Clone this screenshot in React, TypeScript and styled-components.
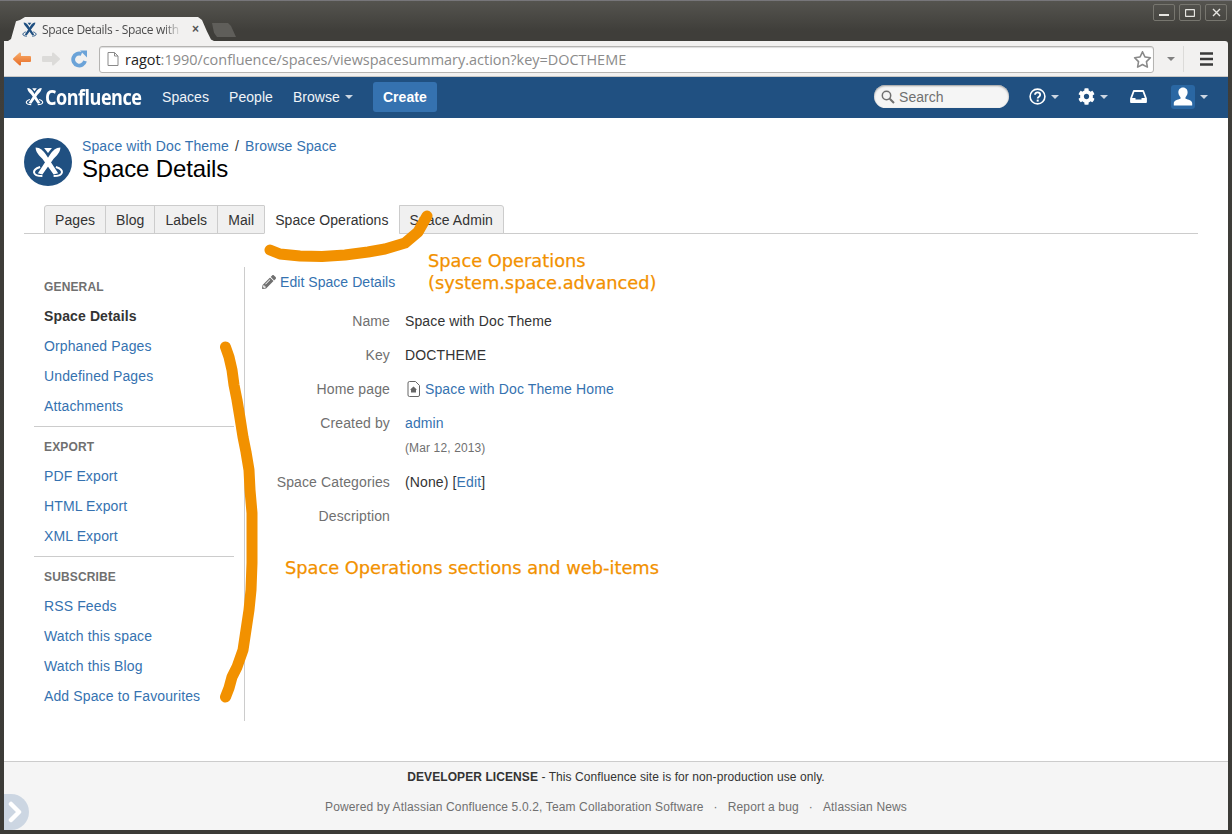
import React from "react";
import styled, { createGlobalStyle } from "styled-components";
import { FaCog, FaPencilAlt } from "react-icons/fa";
import { FaRegStar } from "react-icons/fa6";

const Global = createGlobalStyle`
  html, body { margin: 0; padding: 0; background: #3c3b37; }
  * { box-sizing: border-box; }
`;

const sans = `"Liberation Sans", Arial, sans-serif`;
const ui = `"Open Sans", "Noto Sans", sans-serif`;
const LINK = "#3572b0";
const ORANGE = "#f29100";

const Window = styled.div`
  position: relative;
  width: 1232px;
  height: 834px;
  overflow: hidden;
  display: flex;
  flex-direction: column;
  padding: 0 4px 4px;
  background: linear-gradient(#55544f 0, #3f3e3a 30px, #3c3b37 100%);
  border-top: 1px solid #77767a;
  font-family: ${sans};
`;
const TitleBar = styled.div`
  height: 40px;
  flex: none;
  display: flex;
  align-items: flex-end;
  padding-left: 4px;
  position: relative;
`;
const BrowserTab = styled.div`
  width: 206px;
  height: 24px;
  background: #f2f1f0;
  clip-path: polygon(0 100%, 3px 92%, 8px 18%, 12px 3px, 17px 0, 190px 0, 194px 3px, 199px 60%, 203px 94%, 206px 100%);
  display: flex;
  align-items: center;
  padding: 0 0 0 13px;
  gap: 4px;
  font: 12px ${ui};
  color: #4c4c4c;
`;
const TabTitle = styled.span`
  width: 141px;
  white-space: nowrap;
  letter-spacing: -0.3px;
  -webkit-mask-image: linear-gradient(90deg, #000 122px, transparent 140px);
  mask-image: linear-gradient(90deg, #000 122px, transparent 140px);
`;
const TabClose = styled.span`
  font: bold 12px ${sans};
  color: #555;
  margin-left: 5px;
`;
const NewTab = styled.div`
  width: 24px;
  height: 14px;
  margin: 0 0 4px -2px;
  background: #5f5e5a;
  clip-path: polygon(0 0, 16px 0, 19px 3px, 24px 100%, 5px 100%, 2px 70%);
`;
const WinButtons = styled.div`
  position: absolute;
  top: 3px;
  right: 1px;
  display: flex;
  gap: 4px;
`;
const WinButton = styled.div`
  width: 22px;
  height: 17px;
  border: 1px solid #77766f;
  border-radius: 2px;
  color: #e6e5e1;
  display: flex;
  align-items: center;
  justify-content: center;
`;
const Toolbar = styled.div`
  height: 36px;
  flex: none;
  background: #f2f1f0;
  border-bottom: 1px solid #c9c8c6;
  border-radius: 0 3px 0 0;
  display: flex;
  align-items: center;
  padding: 0 0 0 8px;
`;
const NavGlyph = styled.svg<{ $ml?: number }>`
  flex: none;
  display: block;
  margin-left: ${(p) => p.$ml ?? 0}px;
`;
const Omnibox = styled.div`
  width: 1055px;
  height: 27px;
  margin-left: 11px;
  margin-top: 1px;
  background: #fff;
  border: 1px solid #b5b4b2;
  border-radius: 3px;
  box-shadow: inset 0 1px 1px #ddd;
  display: flex;
  align-items: center;
  padding: 0 1px 0 7px;
  gap: 6px;
`;
const Url = styled.div`
  flex: 1;
  font: 14.45px ${ui};
  color: #8b8b8b;
  white-space: nowrap;
`;
const UrlHost = styled.span`
  color: #222;
`;
const ToolbarSep = styled.div`
  width: 1px;
  height: 26px;
  background: #dcdbd9;
  margin: 0 16px 0 8px;
`;
const Nav = styled.nav`
  height: 41px;
  flex: none;
  background: #205081;
  display: flex;
  align-items: center;
  padding: 0 20px 2px 20px;
  color: #fff;
  font-size: 14px;
  letter-spacing: 0.05px;
`;
const Brand = styled.div`
  display: flex;
  align-items: center;
  width: 138px;
`;
const BrandName = styled.span`
  font: bold 21.5px "Open Sans", sans-serif;
  letter-spacing: -0.6px;
  transform: scaleX(0.84);
  transform-origin: left center;
  white-space: nowrap;
`;
const NavLink = styled.span`
  display: inline-flex;
  align-items: center;
  gap: 5px;
  margin-right: 20px;
  color: #f0f4f8;
`;
const Caret = styled.i<{ $c?: string; $ml?: number }>`
  display: inline-block;
  flex: none;
  width: 0;
  height: 0;
  margin-left: ${(p) => p.$ml ?? 0}px;
  border-left: 4px solid transparent;
  border-right: 4px solid transparent;
  border-top: 4px solid ${(p) => p.$c ?? "#ccd6e2"};
`;
const CreateButton = styled.div`
  width: 64px;
  height: 30px;
  background: #3572b0;
  border-radius: 3px;
  display: flex;
  align-items: center;
  justify-content: center;
  font-weight: bold;
`;
const NavRight = styled.div`
  margin-left: auto;
  display: flex;
  align-items: center;
`;
const SearchBox = styled.div`
  width: 135px;
  height: 23px;
  border-radius: 12px;
  background: #f5f5f5;
  box-shadow: inset 0 1px 2px #999;
  display: flex;
  align-items: center;
  padding-left: 7px;
  gap: 4px;
  color: #707070;
  margin-right: 20px;
`;
const NavIcon = styled.div<{ $w: number }>`
  width: ${(p) => p.$w}px;
  display: flex;
  align-items: center;
  gap: 5px;
`;
const Avatar = styled.div`
  width: 24px;
  height: 24px;
  background: #2a67a3;
  border-radius: 3px;
  display: flex;
  align-items: center;
  justify-content: center;
`;
const Page = styled.main`
  flex: 1;
  display: flex;
  flex-direction: column;
  background: #fff;
  min-height: 0;
  letter-spacing: 0.125px;
`;
const PageHead = styled.header`
  padding: 20px 0 0 20px;
  display: flex;
  gap: 10px;
  height: 87px;
  flex: none;
`;
const SpaceLogo = styled.div`
  width: 48px;
  height: 48px;
  border-radius: 50%;
  background: #205081;
  display: flex;
  align-items: center;
  justify-content: center;
`;
const Crumbs = styled.div`
  font-size: 14px;
  line-height: 16px;
  color: #333;
`;
const A = styled.a`
  color: ${LINK};
  text-decoration: none;
`;
const CrumbSep = styled.span`
  margin: 0 6px;
`;
const Title = styled.h1`
  margin: 0;
  font: normal 24px/30px ${sans};
  letter-spacing: -0.15px;
  color: #000;
`;
const TabBar = styled.div`
  flex: none;
  margin: 0 30px 0 20px;
  height: 29px;
  border-bottom: 1px solid #ccc;
  padding-left: 20px;
  display: flex;
`;
const PageTab = styled.div<{ $active?: boolean }>`
  height: 29px;
  padding: 0 10px;
  margin-left: -1px;
  display: flex;
  align-items: center;
  font-size: 14px;
  letter-spacing: 0.08px;
  color: #333;
  background: ${(p) => (p.$active ? "#fff" : "#f0f0f0")};
  border: 1px solid #ccc;
  border-bottom: ${(p) => (p.$active ? "1px solid #fff" : "1px solid #ccc")};
  border-top-color: ${(p) => (p.$active ? "#fff" : "#ccc")};
  &:first-child { margin-left: 0; border-radius: 3px 0 0 0; }
  &:last-child { border-radius: 0 3px 0 0; }
`;
const Body = styled.div`
  flex: 1;
  padding: 33px 0 0 30px;
  display: flex;
  align-items: flex-start;
  min-height: 0;
`;
const Sidebar = styled.aside`
  width: 200px;
  flex: none;
  padding-bottom: 9px;
`;
const Section = styled.section`
  padding: 10px 0 5px;
  border-bottom: 1px solid #ccc;
  &:last-child { border-bottom: 0; padding-bottom: 0; }
`;
const SectionHeading = styled.div`
  height: 20px;
  margin: 0 0 4px 10px;
  font: bold 12px/20px ${sans};
  letter-spacing: 0.15px;
  color: #707070;
`;
const SideItem = styled.div<{ $current?: boolean }>`
  height: 30px;
  line-height: 30px;
  padding-left: 10px;
  font-size: 14px;
  font-weight: ${(p) => (p.$current ? "bold" : "normal")};
  color: ${(p) => (p.$current ? "#333" : LINK)};
`;
const Content = styled.div`
  margin-left: 10px;
  flex: 1;
  height: 454px;
  border-left: 1px solid #ccc;
  padding: 5px 0 0 17px;
`;
const EditLink = styled.div`
  height: 20px;
  display: flex;
  align-items: center;
  gap: 4px;
  font-size: 14px;
  letter-spacing: 0.05px;
  margin-bottom: 12px;
`;
const Row = styled.div`
  display: grid;
  grid-template-columns: 128px 1fr;
  column-gap: 15px;
  line-height: 34px;
  font-size: 14px;
  color: #333;
`;
const Label = styled.div`
  text-align: right;
  color: #707070;
`;
const ValueLine = styled.div`
  display: flex;
  align-items: center;
  gap: 5px;
  height: 34px;
  padding-left: 2px;
`;
const DateLine = styled.div`
  font-size: 12px;
  line-height: 16px;
  color: #707070;
  margin-bottom: 9px;
`;
const Footer = styled.footer`
  height: 69px;
  flex: none;
  background: #f5f5f5;
  border-top: 1px solid #ccc;
  padding-top: 7px;
  text-align: center;
  font-size: 12px;
  letter-spacing: 0.08px;
  color: #333;
  position: relative;
`;
const FooterLine = styled.div`
  height: 16px;
  line-height: 16px;
  margin-bottom: 14px;
`;
const FooterMuted = styled(FooterLine)`
  color: #707070;
  letter-spacing: 0.14px;
`;
const Dot = styled.span`
  margin: 0 10px;
`;
const Collapse = styled.div`
  position: absolute;
  left: 0;
  bottom: 0;
  width: 25px;
  height: 36px;
  background: #ccd6e2;
  border-radius: 0 18px 18px 0;
  display: flex;
  align-items: center;
  justify-content: center;
  padding-right: 4px;
`;
const Overlay = styled.svg`
  position: absolute;
  inset: -1px 0 0 0;
  pointer-events: none;
`;
const Note = styled.div<{ $x: number; $y: number }>`
  position: absolute;
  left: ${(p) => p.$x}px;
  top: ${(p) => p.$y}px;
  color: ${ORANGE};
  font: 17.8px/22px "DejaVu Sans", sans-serif;
  -webkit-text-stroke: 0.25px ${ORANGE};
  white-space: nowrap;
`;

const BrandMark = ({ size, color = "#fff" }: { size: number; color?: string }) => (
  <svg width={size} height={size} viewBox="0 0 32 32" fill="none" style={{ display: "block", flex: "none" }}>
    <path d="M5 3C9 3 12 6 14 9L25 26L21 27L11 13C8 10 5 7 5 3Z" fill={color} />
    <path d="M27 3C23 3 20 6 18 9L7 26L11 27L21 13C24 10 27 7 27 3Z" fill={color} />
    <path d="M12.500 3.500h7L16 8z" fill={color} />
    <path d="M9 20.500C1 23 2 28.500 11 28.500" stroke={color} strokeWidth="1.800" />
    <path d="M23 20.500C31 23 30 28.500 21 28.500" stroke={color} strokeWidth="1.800" />
  </svg>
);

const SIDE = [
  { h: "GENERAL", items: ["Space Details", "Orphaned Pages", "Undefined Pages", "Attachments"] },
  { h: "EXPORT", items: ["PDF Export", "HTML Export", "XML Export"] },
  { h: "SUBSCRIBE", items: ["RSS Feeds", "Watch this space", "Watch this Blog", "Add Space to Favourites"] },
];

export default function App() {
  return (
    <>
      <Global />
      <Window>
        <TitleBar>
          <BrowserTab>
            <BrandMark size={17} color="#205081" />
            <TabTitle>Space Details - Space with</TabTitle>
            <TabClose>×</TabClose>
          </BrowserTab>
          <NewTab />
          <WinButtons>
            <WinButton>
              <svg width="10" height="8" viewBox="0 0 10 8"><rect x="0" y="5" width="10" height="2" fill="currentColor" /></svg>
            </WinButton>
            <WinButton>
              <svg width="10" height="8" viewBox="0 0 10 8"><rect x=".5" y=".5" width="9" height="7" rx="1" fill="none" stroke="currentColor" strokeWidth="1.300" /></svg>
            </WinButton>
            <WinButton>
              <svg width="9" height="9" viewBox="0 0 9 9"><path d="M1 1l7 7M8 1L1 8" stroke="currentColor" strokeWidth="1.400" /></svg>
            </WinButton>
          </WinButtons>
        </TitleBar>
        <Toolbar>
          <NavGlyph width="20" height="16" viewBox="0 0 20 16">
            <defs>
              <linearGradient id="backFill" x1="0" y1="0" x2="0" y2="1">
                <stop offset="0" stopColor="#f6a866" />
                <stop offset="1" stopColor="#e8702a" />
              </linearGradient>
            </defs>
            <path d="M8 2.500L2 8l6 5.500V10h10V6H8z" fill="url(#backFill)" stroke="url(#backFill)" strokeWidth="2" strokeLinejoin="round" />
          </NavGlyph>
          <NavGlyph width="20" height="16" viewBox="0 0 20 16" $ml={9}>
            <path d="M12 2.500L18 8l-6 5.500V10H2V6h10z" fill="#dcdbd9" stroke="#dcdbd9" strokeWidth="2" strokeLinejoin="round" />
          </NavGlyph>
          <NavGlyph width="18" height="18" viewBox="0 0 18 18" $ml={9}>
            <path d="M15 11A6 6 0 1 1 11.500 4" fill="none" stroke="#6ba3d8" strokeWidth="3.800" />
            <path d="M10 .5l7 0 0 7z" fill="#6ba3d8" />
          </NavGlyph>
          <Omnibox>
            <NavGlyph width="12" height="14" viewBox="0 0 12 14">
              <path d="M1 .5h6.500L11 4v9.500H1z" fill="#fff" stroke="#8a8a8a" />
              <path d="M7.500.5V4H11" fill="none" stroke="#8a8a8a" />
            </NavGlyph>
            <Url>
              <UrlHost>ragot</UrlHost>:1990/confluence/spaces/viewspacesummary.action?key=DOCTHEME
            </Url>
            <FaRegStar size={19} color="#8a8a8a" />
          </Omnibox>
          <Caret $c="#808080" $ml={13} />
          <ToolbarSep />
          <NavGlyph width="14" height="14" viewBox="0 0 14 14">
            <path d="M0 1.500h13M0 7h13M0 12.500h13" stroke="#3a3a3a" strokeWidth="2.400" />
          </NavGlyph>
        </Toolbar>
        <Nav>
          <Brand>
            <BrandMark size={21} />
            <BrandName>Confluence</BrandName>
          </Brand>
          <NavLink>Spaces</NavLink>
          <NavLink>People</NavLink>
          <NavLink>Browse <Caret /></NavLink>
          <CreateButton>Create</CreateButton>
          <NavRight>
            <SearchBox>
              <svg width="14" height="14" viewBox="0 0 14 14" fill="none" stroke="#707070" strokeWidth="1.500">
                <circle cx="5.500" cy="5.500" r="4.200" />
                <path d="M8.700 8.700L13 13" strokeWidth="2" />
              </svg>
              Search
            </SearchBox>
            <NavIcon $w={49}>
              <svg width="17" height="17" viewBox="0 0 17 17" fill="none">
                <circle cx="8.500" cy="8.500" r="7.400" stroke="#fff" strokeWidth="1.600" />
                <path d="M6 6.800c0-3.300 5.200-3.300 5.200 0 0 2-2.500 1.800-2.500 3.700" stroke="#fff" strokeWidth="1.800" />
                <rect x="7.700" y="11.600" width="2" height="2" fill="#fff" />
              </svg>
              <Caret />
            </NavIcon>
            <NavIcon $w={52}>
              <FaCog size={17} color="#fff" />
              <Caret />
            </NavIcon>
            <NavIcon $w={41}>
              <svg width="17" height="13" viewBox="0 0 17 13" fill="none">
                <path d="M3.800 1h9.400l2.800 7.500V12H1V8.500z" stroke="#fff" strokeWidth="1.800" strokeLinejoin="round" />
                <path d="M1 8h4.500v1.500h6V8H16v4H1z" fill="#fff" />
              </svg>
            </NavIcon>
            <NavIcon $w={37}>
              <Avatar>
                <svg width="22" height="22" viewBox="0 0 22 22" fill="#fff">
                  <path d="M11 1.500c3 0 4.800 2.400 4.600 5.300-.2 2-1.100 3.500-2.100 4.400v1.500c2.800.9 6.700 1.600 6.700 4.500v2.300H1.800v-2.300c0-2.900 3.900-3.600 6.700-4.500v-1.500c-1-.9-1.900-2.400-2.100-4.400C6.200 3.900 8 1.500 11 1.500z" />
                </svg>
              </Avatar>
              <Caret />
            </NavIcon>
          </NavRight>
        </Nav>
        <Page>
          <PageHead>
            <SpaceLogo>
              <BrandMark size={36} />
            </SpaceLogo>
            <div>
              <Crumbs>
                <A>Space with Doc Theme</A>
                <CrumbSep>/</CrumbSep>
                <A>Browse Space</A>
              </Crumbs>
              <Title>Space Details</Title>
            </div>
          </PageHead>
          <TabBar>
            <PageTab>Pages</PageTab>
            <PageTab>Blog</PageTab>
            <PageTab>Labels</PageTab>
            <PageTab>Mail</PageTab>
            <PageTab $active>Space Operations</PageTab>
            <PageTab>Space Admin</PageTab>
          </TabBar>
          <Body>
            <Sidebar>
              {SIDE.map((s) => (
                <Section key={s.h}>
                  <SectionHeading>{s.h}</SectionHeading>
                  {s.items.map((i) => (
                    <SideItem key={i} $current={i === "Space Details"}>{i}</SideItem>
                  ))}
                </Section>
              ))}
            </Sidebar>
            <Content>
              <EditLink>
                <FaPencilAlt size={14} color="#707070" />
                <A>Edit Space Details</A>
              </EditLink>
              <Row><Label>Name</Label><div>Space with Doc Theme</div></Row>
              <Row><Label>Key</Label><div>DOCTHEME</div></Row>
              <Row>
                <Label>Home page</Label>
                <ValueLine>
                  <svg width="13" height="16" viewBox="0 0 13 16" fill="none">
                    <path d="M2.500.5h6l4 4v9.500a1.500 1.500 0 0 1-1.500 1.500H2.500A1.500 1.500 0 0 1 1 14V2A1.500 1.500 0 0 1 2.500.5z" stroke="#666" />
                    <path d="M6.500 5.500L10 8.800H9V11.500H4V8.800H3z" fill="#666" />
                  </svg>
                  <A>Space with Doc Theme Home</A>
                </ValueLine>
              </Row>
              <Row>
                <Label>Created by</Label>
                <div>
                  <A>admin</A>
                  <DateLine>(Mar 12, 2013)</DateLine>
                </div>
              </Row>
              <Row><Label>Space Categories</Label><div>(None) [<A>Edit</A>]</div></Row>
              <Row><Label>Description</Label><div /></Row>
            </Content>
          </Body>
          <Footer>
            <FooterLine><b>DEVELOPER LICENSE</b> - This Confluence site is for non-production use only.</FooterLine>
            <FooterMuted>
              Powered by Atlassian Confluence 5.0.2, Team Collaboration Software
              <Dot>·</Dot>Report a bug<Dot>·</Dot>Atlassian News
            </FooterMuted>
            <Collapse>
              <svg width="14" height="22" viewBox="0 0 14 22" fill="none">
                <path d="M3 3l8 8-8 8" stroke="#fff" strokeWidth="4.500" strokeLinecap="round" strokeLinejoin="round" />
              </svg>
            </Collapse>
          </Footer>
        </Page>
        <Overlay width="1232" height="834" viewBox="0 0 1232 834" fill="none" stroke={ORANGE} strokeLinecap="round" strokeLinejoin="round">
          <path d="M270 250L280 254L300 256L322 256.500L345 255L368 252L385 249L405 243L418 232L427 216" strokeWidth="11" />
          <path d="M225.500 347L229 357L232 370L234 385L237 400L240 418L243 437L246 452L249 470L250 490L252 513L252 540L252 563L251 590L249 610L246 630L243 650L237 667L232 677L229 688L225.500 697" strokeWidth="11" />
        </Overlay>
        <Note $x={428} $y={249}>Space Operations</Note>
        <Note $x={428} $y={271}>(system.space.advanced)</Note>
        <Note $x={285} $y={556}>Space Operations sections and web-items</Note>
      </Window>
    </>
  );
}
